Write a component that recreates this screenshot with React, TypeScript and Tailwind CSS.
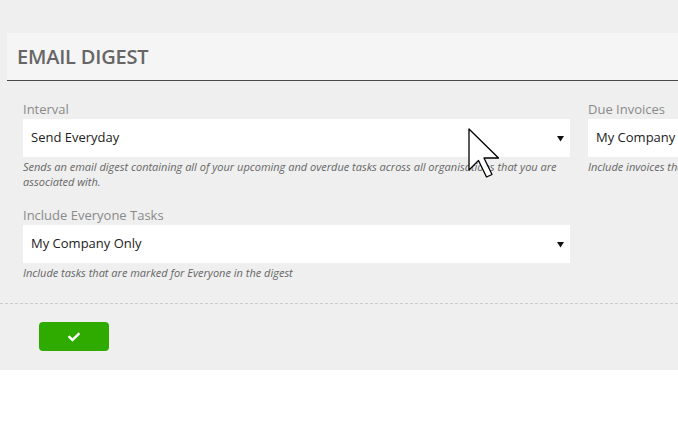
import { FaCheck } from 'react-icons/fa';

const font = { fontFamily: '"Open Sans", "Liberation Sans", sans-serif' };

function Caret() {
  return (
    <svg width="7" height="7" viewBox="0 0 7 7" className="shrink-0">
      <polygon points="0,1 7,1 3.5,6.5" fill="#111" />
    </svg>
  );
}

interface FieldProps {
  label: string;
  value: string;
  help: string;
  caret?: boolean;
}

function Field({ label, value, help, caret = true }: FieldProps) {
  return (
    <div className="flex flex-col">
      <label className="text-[13px] leading-[18px] text-[#8a8a8a] mb-px">{label}</label>
      <div className="h-[38px] bg-white flex items-center justify-between pl-2 pr-[6px]">
        <span className="text-[13px] text-[#222] whitespace-nowrap">{value}</span>
        {caret && <Caret />}
      </div>
      <p className="mt-[2px] text-[11px] leading-[15px] italic text-[#666]">{help}</p>
    </div>
  );
}

function Cursor() {
  return (
    <svg
      width="34"
      height="52"
      viewBox="0 0 34 52"
      className="absolute left-[468px] top-[128px] pointer-events-none"
    >
      <path
        d="M1 1 L1 42 L10.5 32.5 L18.5 49 L24 46.5 L16 30 L30.5 30 Z"
        fill="#fff"
        stroke="#000"
        strokeWidth="1.3"
        strokeLinejoin="round"
      />
    </svg>
  );
}

export default function App() {
  return (
    <div className="w-[678px] h-[422px] bg-white overflow-hidden relative" style={font}>
      <div className="bg-[#efefef] pt-[33px] pb-[19px]">
        <div className="ml-[7px] h-[48px] bg-[#f5f5f5] border-b border-[#4a4a4a] flex items-center pl-[10px]">
          <h2 className="text-[20px] font-semibold text-[#666] tracking-[-0.2px]">EMAIL DIGEST</h2>
        </div>

        <div className="pl-[23px] pt-[19px] pb-[23px] flex gap-[18px] overflow-hidden">
          <div className="w-[547px] shrink-0 flex flex-col gap-[17px]">
            <Field
              label="Interval"
              value="Send Everyday"
              help="Sends an email digest containing all of your upcoming and overdue tasks across all organisations that you are associated with."
            />
            <Field
              label="Include Everyone Tasks"
              value="My Company Only"
              help="Include tasks that are marked for Everyone in the digest"
            />
          </div>
          <div className="w-[547px] shrink-0">
            <Field
              label="Due Invoices"
              value="My Company Only"
              help="Include invoices that are due in the digest"
            />
          </div>
        </div>

        <div className="border-t border-dashed border-[#cccccc]" />

        <div className="pl-[39px] pt-[18px]">
          <button className="w-[70px] h-[29px] rounded-[4px] bg-[#2fab00] flex items-center justify-center">
            <FaCheck className="text-white" size={12} />
          </button>
        </div>
      </div>
      <Cursor />
    </div>
  );
}
